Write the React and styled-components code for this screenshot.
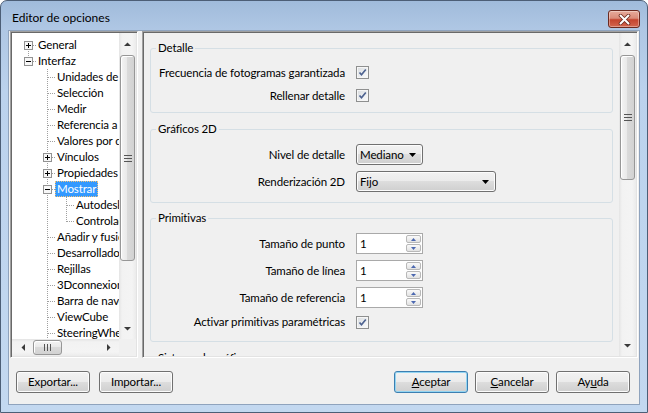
import React from 'react';
import styled, { createGlobalStyle, css } from 'styled-components';

const Global = createGlobalStyle`
  html, body { margin: 0; padding: 0; background: #ffffff; }
  body { font-family: Lato, "Noto Sans", "Liberation Sans", sans-serif; font-size: 11.5px; letter-spacing: -0.12px; color: #000; }
  *, *::before, *::after { box-sizing: border-box; }
`;

const Window = styled.div`
  width: 648px;
  height: 413px;
  display: flex;
  flex-direction: column;
  padding: 0 7px 7px;
  border: 1px solid #4c5e76;
  border-radius: 7px 7px 0 0;
  background: linear-gradient(180deg, #a0bbdb 0px, #afc7e4 28px, #bbd2ed 90px, #c3d8f0 100%);
`;

const TitleBar = styled.div`
  height: 29px;
  flex: none;
  display: flex;
  align-items: flex-start;
  justify-content: space-between;
  padding-left: 4px;
`;

const Title = styled.div`
  margin-top: 9px;
  line-height: 16px;
  font-size: 12px;
  letter-spacing: 0;
  color: #000;
`;

const CloseButton = styled.div`
  width: 32px;
  height: 18px;
  margin-top: 9px;
  border: 1px solid #6b2a20;
  border-radius: 3px;
  background: linear-gradient(180deg, #e6ab9b 0%, #da8c7a 45%, #c4442e 55%, #d3664f 100%);
  box-shadow: inset 0 0 0 1px rgba(255, 255, 255, 0.35);
  display: flex;
  align-items: center;
  justify-content: center;
`;

const Client = styled.div`
  flex: 1;
  display: flex;
  flex-direction: column;
  background: #f0f0f0;
  border: 1px solid #8fa3bd;
  padding: 0 1px 11px;
`;

const Panels = styled.div`
  height: 327px;
  flex: none;
  display: flex;
  gap: 4px;
`;

const sunken = css`
  border: 1px solid;
  border-color: #a0a0a0 #ffffff #ffffff #a0a0a0;
  box-shadow: inset 1px 1px 0 #696969, inset -1px -1px 0 #e3e3e3;
  padding: 1px;
`;

const TreeBox = styled.div`
  ${sunken};
  width: 128px;
  flex: none;
  background: #fff;
  display: grid;
  grid-template-columns: 1fr 17px;
  grid-template-rows: 1fr 17px;
  min-height: 0;
`;

const TreeViewport = styled.div`
  overflow: hidden;
  background: #fff;
  padding: 4px 0 0 7px;
  min-width: 0;
  min-height: 0;
`;

const TreeRow = styled.div`
  display: flex;
  align-items: center;
  height: 16px;
  white-space: nowrap;
`;

const GutterSvg = styled.svg`
  display: block;
  flex: none;
`;

const TreeLabel = styled.span`
  padding: 0 2px;
  line-height: 16px;
  height: 16px;
  color: #000;
  ${(p) =>
    p.$selected &&
    css`
      background: #3399ff;
      color: #fff;
      outline: 1px dotted #f2c27a;
      outline-offset: -1px;
    `}
`;

const Corner = styled.div`
  background: #f0f0f0;
`;

const Bar = styled.div`
  display: flex;
  flex-direction: ${(p) => (p.$horizontal ? 'row' : 'column')};
  min-width: 0;
  min-height: 0;
  background: ${(p) =>
    p.$horizontal
      ? 'linear-gradient(180deg, #e4e4e4 0, #f2f2f2 3px, #f4f4f4 13px, #ebebeb 100%)'
      : 'linear-gradient(90deg, #e4e4e4 0, #f2f2f2 3px, #f4f4f4 13px, #ebebeb 100%)'};
`;

const ArrowBtn = styled.div`
  flex: none;
  ${(p) => (p.$horizontal ? 'width: 21px; height: 17px;' : 'width: 17px; height: 21px;')}
  display: flex;
  align-items: center;
  justify-content: center;
`;

const Track = styled.div`
  flex: 1;
  display: flex;
  flex-direction: ${(p) => (p.$horizontal ? 'row' : 'column')};
  min-width: 0;
  min-height: 0;
`;

const Thumb = styled.div`
  flex: none;
  border: 1px solid #979797;
  border-radius: 3px;
  display: flex;
  align-items: center;
  justify-content: center;
  box-shadow: inset 1px 1px 0 #ffffff;
  ${(p) =>
    p.$horizontal
      ? css`
          height: 15px;
          margin: 1px 0 0 ${p.$offset}px;
          width: ${p.$size}px;
          background: linear-gradient(180deg, #f4f4f4 0%, #e9e9e9 45%, #dadada 50%, #d2d2d2 100%);
        `
      : css`
          width: 15px;
          margin: ${p.$offset}px 0 0 1px;
          height: ${p.$size}px;
          background: linear-gradient(90deg, #f4f4f4 0%, #e9e9e9 45%, #dadada 50%, #d2d2d2 100%);
        `}
`;

const Arrow = ({ dir }) => {
  const pts = {
    up: '0,4 7,4 3.5,0.5',
    down: '0,0 7,0 3.5,3.5',
    left: '4,0 4,7 0.5,3.5',
    right: '0,0 0,7 3.5,3.5',
  }[dir];
  const horiz = dir === 'left' || dir === 'right';
  return (
    <svg width={horiz ? 4 : 7} height={horiz ? 7 : 4}>
      <polygon points={pts} fill="#3a3a3a" />
    </svg>
  );
};

const Grip = ({ horizontal }) =>
  horizontal ? (
    <svg width="8" height="7">
      <g stroke="#555" shapeRendering="crispEdges">
        <line x1="0.5" y1="0" x2="0.5" y2="7" />
        <line x1="3.5" y1="0" x2="3.5" y2="7" />
        <line x1="6.5" y1="0" x2="6.5" y2="7" />
      </g>
    </svg>
  ) : (
    <svg width="8" height="7">
      <g stroke="#555" shapeRendering="crispEdges">
        <line x1="0" y1="0.5" x2="8" y2="0.5" />
        <line x1="0" y1="3.5" x2="8" y2="3.5" />
        <line x1="0" y1="6.5" x2="8" y2="6.5" />
      </g>
    </svg>
  );

const ScrollBar = ({ horizontal, offset, size }) => (
  <Bar $horizontal={horizontal}>
    <ArrowBtn $horizontal={horizontal}>
      <Arrow dir={horizontal ? 'left' : 'up'} />
    </ArrowBtn>
    <Track $horizontal={horizontal}>
      <Thumb $horizontal={horizontal} $offset={offset} $size={size}>
        <Grip horizontal={horizontal} />
      </Thumb>
    </Track>
    <ArrowBtn $horizontal={horizontal}>
      <Arrow dir={horizontal ? 'right' : 'down'} />
    </ArrowBtn>
  </Bar>
);

const Gutter = ({ level, cont = [], first, last, box }) => {
  const W = 19 * (level + 1) - 2;
  const p = 9 + 19 * level;
  const dot = { stroke: '#a0a0a0', strokeDasharray: '1 1', shapeRendering: 'crispEdges' };
  const items = [];
  for (let a = 0; a < level; a++) {
    if (cont[a]) {
      const x = 9.5 + 19 * a;
      items.push(<line key={'a' + a} x1={x} y1={0} x2={x} y2={16} {...dot} />);
    }
  }
  items.push(
    <line key="v" x1={p + 0.5} y1={first ? 8 : 0} x2={p + 0.5} y2={last ? 9 : 16} {...dot} />
  );
  items.push(<line key="h" x1={p + 1} y1={8.5} x2={W} y2={8.5} {...dot} />);
  if (box) {
    items.push(
      <rect key="b" x={p - 3.5} y={4.5} width={8} height={8} fill="#f7f7f7" stroke="#929292" shapeRendering="crispEdges" />
    );
    items.push(
      <line key="m" x1={p - 2} y1={8.5} x2={p + 3} y2={8.5} stroke="#000" shapeRendering="crispEdges" />
    );
    if (box === '+') {
      items.push(
        <line key="pl" x1={p + 0.5} y1={6} x2={p + 0.5} y2={11} stroke="#000" shapeRendering="crispEdges" />
      );
    }
  }
  return (
    <GutterSvg width={W} height={16}>
      {items}
    </GutterSvg>
  );
};

const L1 = [false];
const L2 = [false, true];
const treeData = [
  { t: 'General', l: 0, first: true, box: '+' },
  { t: 'Interfaz', l: 0, last: true, box: '-' },
  { t: 'Unidades de visualización', l: 1, cont: L1 },
  { t: 'Selección', l: 1, cont: L1 },
  { t: 'Medir', l: 1, cont: L1 },
  { t: 'Referencia a instantánea', l: 1, cont: L1 },
  { t: 'Valores por defecto', l: 1, cont: L1 },
  { t: 'Vínculos', l: 1, cont: L1, box: '+' },
  { t: 'Propiedades rápidas', l: 1, cont: L1, box: '+' },
  { t: 'Mostrar', l: 1, cont: L1, box: '-', selected: true },
  { t: 'Autodesk', l: 2, cont: L2 },
  { t: 'Controladores', l: 2, cont: L2, last: true },
  { t: 'Añadir y fusionar', l: 1, cont: L1 },
  { t: 'Desarrollador', l: 1, cont: L1 },
  { t: 'Rejillas', l: 1, cont: L1 },
  { t: '3Dconnexion', l: 1, cont: L1 },
  { t: 'Barra de navegación', l: 1, cont: L1 },
  { t: 'ViewCube', l: 1, cont: L1 },
  { t: 'SteeringWheels', l: 1, cont: L1 },
  { t: 'Interfaz de usuario', l: 1, cont: L1 },
];

const OptionsPanel = styled.div`
  ${sunken};
  flex: 1;
  min-width: 0;
  background: #f0f0f0;
  display: grid;
  grid-template-columns: 1fr 17px;
  min-height: 0;
`;

const PanelContent = styled.div`
  overflow: hidden;
  padding: 8px 6px 0 6px;
  min-width: 0;
  min-height: 0;
`;

const Group = styled.fieldset`
  margin: ${(p) => p.$mt}px 0 0;
  padding: 0;
  border: 1px solid #d5dfe5;
  border-radius: 3px;
  min-width: 0;
`;

const Legend = styled.legend`
  padding: 0 2px;
  margin-left: 5px;
  line-height: 14px;
  color: #000;
`;

const Fields = styled.div`
  display: grid;
  grid-template-columns: 194px auto;
  grid-auto-rows: ${(p) => p.$rows || 'auto'};
  column-gap: 11px;
  row-gap: ${(p) => p.$gap}px;
  align-items: center;
  justify-items: start;
  padding: ${(p) => p.$pt}px 0 ${(p) => p.$pb}px;
`;

const Label = styled.span`
  justify-self: end;
  text-align: right;
  line-height: 16px;
  white-space: nowrap;
`;

const CheckBox = styled.span`
  display: flex;
  align-items: center;
  justify-content: center;
  width: 13px;
  height: 13px;
  border: 1px solid #8e8f8f;
  background: linear-gradient(135deg, #d8dbde 0%, #eef0f2 60%, #fbfbfb 100%);
  box-shadow: inset 0 0 0 1px #f6f6f6;
`;

const Check = () => (
  <CheckBox>
    <svg width="9" height="9" viewBox="0 0 9 9">
      <path d="M1.5 4.5 L3.5 6.8 L7.8 1.5" fill="none" stroke="#4d6290" strokeWidth="1.7" />
    </svg>
  </CheckBox>
);

const Select = styled.div`
  width: ${(p) => p.$w}px;
  height: 21px;
  border: 1px solid #707070;
  border-radius: 3px;
  background: linear-gradient(180deg, #f2f2f2 0%, #ebebeb 50%, #dddddd 50%, #cfcfcf 100%);
  box-shadow: inset 0 0 0 1px #fcfcfc;
  display: flex;
  align-items: center;
  justify-content: space-between;
  padding: 0 6px 0 3px;
  line-height: 16px;
`;

const DropArrow = () => (
  <svg width="7" height="4">
    <polygon points="0,0 7,0 3.5,4" fill="#000" />
  </svg>
);

const SpinBox = styled.div`
  width: 67px;
  height: 21px;
  border: 1px solid #a9a9a9;
  background: #fff;
  display: flex;
  padding: 1px;
`;

const SpinValue = styled.div`
  flex: 1;
  padding-left: 2px;
  line-height: 17px;
`;

const SpinButtons = styled.div`
  width: 15px;
  display: flex;
  flex-direction: column;
  gap: 1px;
`;

const SpinBtn = styled.div`
  flex: 1;
  border: 1px solid #b8b8b8;
  border-radius: 2px;
  background: linear-gradient(180deg, #fafafa, #e2e2e2);
  display: flex;
  align-items: center;
  justify-content: center;
`;

const Spin = ({ value }) => (
  <SpinBox>
    <SpinValue>{value}</SpinValue>
    <SpinButtons>
      <SpinBtn>
        <svg width="5" height="3">
          <polygon points="0,3 5,3 2.5,0" fill="#4c68b0" />
        </svg>
      </SpinBtn>
      <SpinBtn>
        <svg width="5" height="3">
          <polygon points="0,0 5,0 2.5,3" fill="#4c68b0" />
        </svg>
      </SpinBtn>
    </SpinButtons>
  </SpinBox>
);

const ButtonRow = styled.div`
  margin-top: 13px;
  height: 22px;
  flex: none;
  display: flex;
  justify-content: space-between;
  padding: 0 8px 0 6px;
`;

const ButtonGroup = styled.div`
  display: flex;
  gap: ${(p) => p.$gap}px;
`;

const Button = styled.div`
  width: 74px;
  height: 22px;
  border: 1px solid ${(p) => (p.$default ? '#3c7fb1' : '#707070')};
  border-radius: 3px;
  background: linear-gradient(180deg, #f2f2f2 0%, #ebebeb 50%, #dddddd 50%, #cfcfcf 100%);
  box-shadow: inset 0 0 0 1px ${(p) => (p.$default ? '#94d5f2' : '#fcfcfc')};
  display: flex;
  align-items: center;
  justify-content: center;
  line-height: 16px;
  color: #000;
`;

export default function App() {
  return (
    <>
      <Global />
      <Window>
        <TitleBar>
          <Title>Editor de opciones</Title>
          <CloseButton>
            <svg width="13" height="11" viewBox="0 0 13 11">
              <path d="M2.5 1.5 L10.5 9.5 M10.5 1.5 L2.5 9.5" stroke="#6a2a1f" strokeWidth="3.6" strokeLinecap="round" />
              <path d="M2.5 1.5 L10.5 9.5 M10.5 1.5 L2.5 9.5" stroke="#ffffff" strokeWidth="2" strokeLinecap="round" />
            </svg>
          </CloseButton>
        </TitleBar>
        <Client>
          <Panels>
            <TreeBox>
              <TreeViewport>
                {treeData.map((r) => (
                  <TreeRow key={r.t}>
                    <Gutter level={r.l} cont={r.cont} first={r.first} last={r.last} box={r.box} />
                    <TreeLabel $selected={r.selected}>{r.t}</TreeLabel>
                  </TreeRow>
                ))}
              </TreeViewport>
              <ScrollBar offset={1} size={206} />
              <ScrollBar horizontal offset={0} size={29} />
              <Corner />
            </TreeBox>
            <OptionsPanel>
              <PanelContent>
                <Group $mt={0}>
                  <Legend>Detalle</Legend>
                  <Fields $rows="23px" $gap={0} $pt={6} $pb={5}>
                    <Label>Frecuencia de fotogramas garantizada</Label>
                    <Check />
                    <Label>Rellenar detalle</Label>
                    <Check />
                  </Fields>
                </Group>
                <Group $mt={9}>
                  <Legend>Gráficos 2D</Legend>
                  <Fields $gap={6} $pt={8} $pb={10}>
                    <Label>Nivel de detalle</Label>
                    <Select $w={67}>
                      <span>Mediano</span>
                      <DropArrow />
                    </Select>
                    <Label>Renderización 2D</Label>
                    <Select $w={140}>
                      <span>Fijo</span>
                      <DropArrow />
                    </Select>
                  </Fields>
                </Group>
                <Group $mt={8}>
                  <Legend>Primitivas</Legend>
                  <Fields $gap={6} $pt={8} $pb={11}>
                    <Label>Tamaño de punto</Label>
                    <Spin value="1" />
                    <Label>Tamaño de línea</Label>
                    <Spin value="1" />
                    <Label>Tamaño de referencia</Label>
                    <Spin value="1" />
                    <Label>Activar primitivas paramétricas</Label>
                    <Check />
                  </Fields>
                </Group>
                <Group $mt={9}>
                  <Legend>Sistema de gráficos</Legend>
                  <Fields $gap={6} $pt={8} $pb={10}>
                    <Label>Selección automática</Label>
                    <Check />
                  </Fields>
                </Group>
              </PanelContent>
              <ScrollBar offset={1} size={125} />
            </OptionsPanel>
          </Panels>
          <ButtonRow>
            <ButtonGroup $gap={9}>
              <Button>Exportar...</Button>
              <Button>Importar...</Button>
            </ButtonGroup>
            <ButtonGroup $gap={7}>
              <Button $default>
                <span>
                  <u>A</u>ceptar
                </span>
              </Button>
              <Button>
                <span>
                  <u>C</u>ancelar
                </span>
              </Button>
              <Button>
                <span>
                  Ay<u>u</u>da
                </span>
              </Button>
            </ButtonGroup>
          </ButtonRow>
        </Client>
      </Window>
    </>
  );
}
